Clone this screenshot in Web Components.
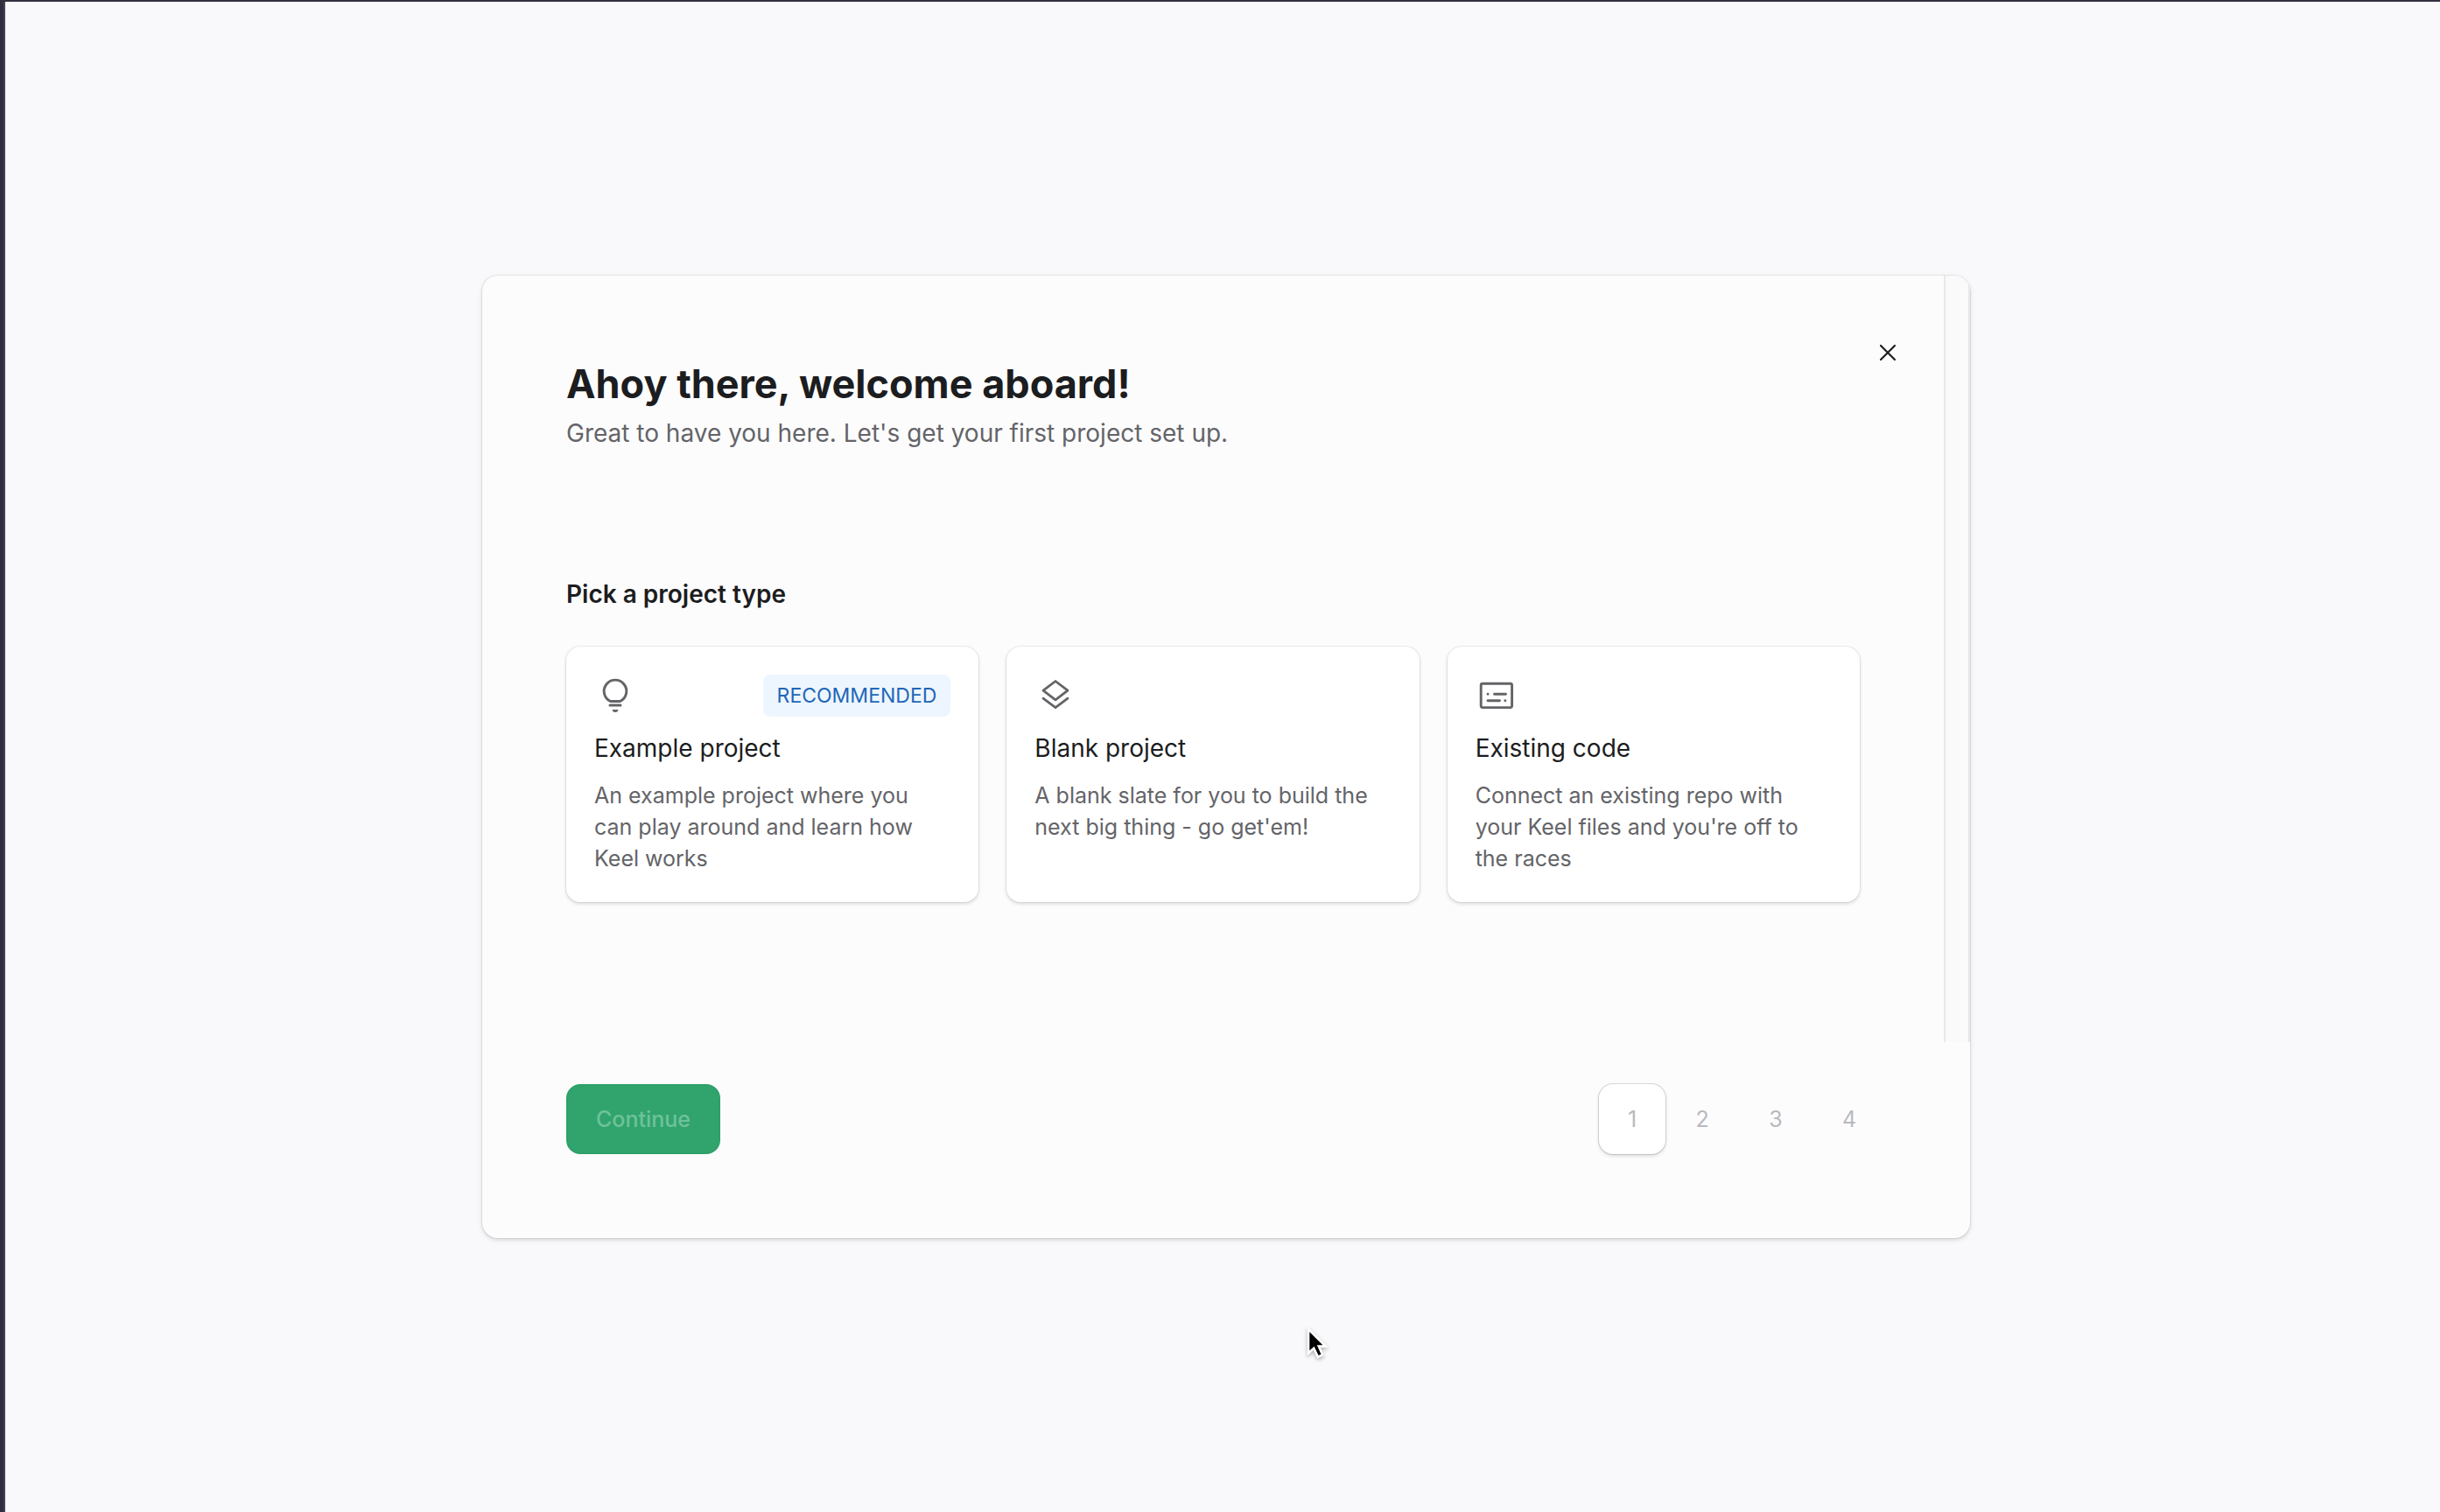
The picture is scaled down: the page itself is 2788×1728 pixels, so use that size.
<!DOCTYPE html>
<html lang="en">
<head>
<meta charset="utf-8">
<title>Welcome</title>
<style>
  html, body { margin: 0; height: 100%; }
  body { font-family: Inter, "Liberation Sans", sans-serif; color: #1c1d20; background: #f9f9fb; }
</style>
</head>
<body>
<app-window>
  <welcome-dialog>
    <dialog-header slot="header">
      <span slot="title">Ahoy there, welcome aboard!</span>
      <span slot="subtitle">Great to have you here. Let's get your first project set up.</span>
    </dialog-header>
    <project-types slot="body">
      <span slot="heading">Pick a project type</span>
      <project-card icon="bulb" badge="RECOMMENDED">
        <span slot="name">Example project</span>
        An example project where you can play around and learn how Keel works
      </project-card>
      <project-card icon="layers">
        <span slot="name">Blank project</span>
        A blank slate for you to build the next big thing - go get'em!
      </project-card>
      <project-card icon="code">
        <span slot="name">Existing code</span>
        Connect an existing repo with your Keel files and you're off to the races
      </project-card>
    </project-types>
    <continue-button slot="footer">Continue</continue-button>
    <step-pager slot="footer" steps="4" current="1"></step-pager>
  </welcome-dialog>
</app-window>
<mouse-pointer></mouse-pointer>
<script>
const define = (name, render) => customElements.define(name, class extends HTMLElement {
  constructor() {
    super();
    this.attachShadow({ mode: "open" });
  }
  connectedCallback() {
    this.shadowRoot.innerHTML = "<style>*{box-sizing:border-box}button{font:inherit;margin:0}</style>" + render(this);
  }
});

const icons = {
  bulb: `<path d="M18.5 30.5A12.8 12.8 0 1 1 29.5 30.5Z" fill="none" stroke="currentColor" stroke-width="2.9" stroke-linejoin="round"/>
    <path d="M18 35H30" stroke="currentColor" stroke-width="3" stroke-linecap="round"/>
    <path d="M20.5 40H27.5Q27 43 24 43Q21 43 20.5 40Z" fill="currentColor"/>`,
  layers: `<g fill="none" stroke="currentColor" stroke-width="2.8" stroke-linejoin="round" stroke-linecap="round">
    <path d="M24 7.5L38 18.2L24 28.8L10 18.2Z"/><path d="M10 27.2L24 37.6L38 27.2"/></g>`,
  code: `<g fill="none" stroke="currentColor" stroke-width="2.9" stroke-linecap="round" stroke-linejoin="round">
    <rect x="6.2" y="10.2" width="35.4" height="27.4" rx="2"/>
    <path d="M14 22.2H14.1M21.5 22.2H34.5M14 29.8H27.5M33.8 29.8H33.9"/></g>`
};

define("app-window", () => `
<style>
  :host { display: flex; flex-direction: column; min-height: 100vh; box-sizing: border-box; border-top: 2px solid #322f3f; background: #f9f9fb; }
  .row { flex: 1; display: flex; }
  .edge { width: 6px; background: #2f2e40; border-right: 2px solid #464557; }
  main { flex: 1; display: flex; align-items: center; justify-content: center; padding: 0 0 0 8px; }
</style>
<div class="row"><div class="edge"></div><main><slot></slot></main></div>`);

define("welcome-dialog", () => `
<style>
  :host { display: block; width: 100%; max-width: 1700px; border-radius: 18px; overflow: hidden; background: #fcfcfd;
    box-shadow: 0 0 0 1px rgba(0,0,0,.06), 0 2px 4px rgba(0,0,0,.12), 0 2px 10px rgba(0,0,0,.04); }
  .top { display: flex; }
  .content { flex: 1; padding-bottom: 160px; }
  .track { width: 30px; border: 2px solid #e8e8e8; border-width: 0 2px; background: #fafafa; }
  footer { display: flex; justify-content: space-between; align-items: center; padding: 48px 96px 96px; }
</style>
<div class="top">
  <div class="content"><slot name="header"></slot><slot name="body"></slot></div>
  <div class="track"></div>
</div>
<footer><slot name="footer"></slot></footer>`);

define("dialog-header", () => `
<style>
  :host { display: block; }
  header { display: flex; justify-content: space-between; align-items: flex-start; padding: 64px 40px 0 96px; }
  .text { display: flex; flex-direction: column; gap: 8px; padding-top: 32px; }
  h1 { margin: 0; font-size: 45px; line-height: 56px; font-weight: 700; }
  p { margin: 0; font-size: 28px; line-height: 40px; color: #646468; }
  button { width: 48px; height: 48px; padding: 0; border: 0; background: none; color: #1c1d20; }
  svg { display: block; }
</style>
<header>
  <div class="text"><h1><slot name="title"></slot></h1><p><slot name="subtitle"></slot></p></div>
  <button type="button" aria-label="Close"><svg width="48" height="48" viewBox="0 0 48 48"><path d="M16 16L32 32M32 16L16 32" stroke="currentColor" stroke-width="2.2" stroke-linecap="round"/></svg></button>
</header>`);

define("project-types", () => `
<style>
  :host { display: block; padding: 144px 96px 0; }
  h2 { margin: 0 0 40px; font-size: 28px; line-height: 40px; font-weight: 600; }
  .cards { display: grid; grid-template-columns: repeat(3, 1fr); gap: 32px; }
</style>
<h2><slot name="heading"></slot></h2>
<div class="cards"><slot></slot></div>`);

define("project-card", el => `
<style>
  :host { display: block; }
  button { display: flex; flex-direction: column; justify-content: flex-start; gap: 16px; width: 100%; height: 100%; padding: 32px; border: 0; border-radius: 16px; background: #fff; color: inherit; text-align: left;
    box-shadow: 0 0 0 1px rgba(0,0,30,.06), 0 2px 4px rgba(0,0,0,.14); }
  .head { display: flex; justify-content: space-between; height: 48px; color: #646468; }
  .badge { padding: 0 16px; border-radius: 8px; background: #edf6ff; color: #1f66b8; font-size: 23px; line-height: 48px; }
  .name { font-size: 28px; line-height: 40px; color: #1c1d20; }
  .desc { font-size: 25px; line-height: 36px; color: #646468; }
</style>
<button type="button">
  <span class="head"><svg width="48" height="48" viewBox="0 0 48 48" aria-hidden="true">${icons[el.getAttribute("icon")]}</svg>${el.hasAttribute("badge") ? `<span class="badge">${el.getAttribute("badge")}</span>` : ""}</span>
  <span class="name"><slot name="name"></slot></span>
  <span class="desc"><slot></slot></span>
</button>`);

define("continue-button", () => `
<style>
  :host { display: block; }
  button { display: block; padding: 20px 32px; border: 2px solid #2ea069; border-radius: 16px; background: #30a46c; color: #6fc19a; font-size: 25px; line-height: 36px; font-weight: 500; }
</style>
<button type="button" disabled><slot></slot></button>`);

define("step-pager", el => {
  const current = Number(el.getAttribute("current"));
  const buttons = Array.from({ length: Number(el.getAttribute("steps")) }, (_, i) =>
    `<button type="button"${i + 1 === current ? ' aria-current="step"' : ""}>${i + 1}</button>`).join("");
  return `
<style>
  :host { display: block; }
  nav { display: flex; }
  button { width: 84px; height: 80px; padding: 0; border: 0; border-radius: 16px; background: none; color: #b9b9be; font-size: 25px; line-height: 36px; font-weight: 400; }
  button[aria-current] { width: 76px; background: #fff; box-shadow: 0 0 0 1px rgba(0,0,0,.13), 0 2px 4px rgba(0,0,0,.14); }
</style>
<nav aria-label="Steps">${buttons}</nav>`;
});

define("mouse-pointer", () => `
<style>
  :host { position: absolute; left: 1490px; top: 1512px; pointer-events: none; }
  svg { display: block; filter: drop-shadow(0 2px 2px rgba(0,0,0,.3)); }
</style>
<svg width="32" height="44" viewBox="0 0 32 44"><path d="M5 7V34.5L11.2 28.8L16 38.8L21.2 36.4L16.8 26.6H24.6Z" fill="#000" stroke="#fff" stroke-width="2.6"/></svg>`);
</script>
</body>
</html>
